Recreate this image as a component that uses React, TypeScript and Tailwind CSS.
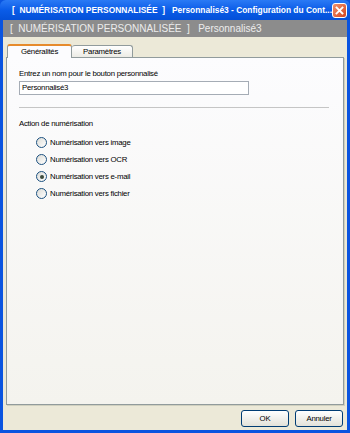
import React from 'react';

const font = { fontFamily: '"Liberation Sans", Arial, sans-serif' };

function Radio({ label, checked }: { label: string; checked?: boolean }) {
    return (
        <div className="flex items-center h-[17px]">
            <span className="w-[11px] h-[11px] rounded-full border border-[#1c5180] bg-gradient-to-br from-[#dcdcd7] to-white flex items-center justify-center">
                {checked && <span className="w-[4px] h-[4px] rounded-full bg-[#3c4a3c]" />}
            </span>
            <span className="ml-[3px] text-[7.8px] tracking-[-0.25px] text-black">{label}</span>
        </div>
    );
}

function XpButton({ label }: { label: string }) {
    return (
        <button className="w-[48px] h-[17px] rounded-[3px] border border-[#003c74] bg-gradient-to-b from-white to-[#e3e2da] text-[7.8px] tracking-[-0.25px] text-black leading-none">
            {label}
        </button>
    );
}

export default function App() {
    return (
        <div className="w-[350px] h-[433px] flex flex-col bg-[#0a54e0] overflow-hidden" style={font}>
            {/* title bar */}
            <div className="h-[20px] flex items-center bg-gradient-to-b from-[#2a7af5] via-[#0a5ce8] to-[#0450d8] rounded-t-[6px] pl-[12px] pr-[3px]">
                <span className="min-w-0 overflow-hidden text-white font-bold text-[8.4px] whitespace-nowrap">
                    [&nbsp;&nbsp;NUMÉRISATION PERSONNALISÉE&nbsp;&nbsp;]&nbsp;&nbsp;&nbsp;Personnalisé3 - Configuration du Cont...
                </span>
                <div className="ml-auto shrink-0 w-[15px] h-[15px] rounded-[3px] border border-white bg-gradient-to-br from-[#f0916c] to-[#d2431c] flex items-center justify-center">
                    <svg width="9" height="9" viewBox="0 0 9 9">
                        <path d="M1.5 1.5 L7.5 7.5 M7.5 1.5 L1.5 7.5" stroke="white" strokeWidth="1.8" strokeLinecap="square" />
                    </svg>
                </div>
            </div>

            {/* window body */}
            <div className="flex-1 flex flex-col mx-[3px] mb-[3px] bg-[#ece9d8]">
                <div className="h-[17px] bg-[#8c8c8c] flex items-center pl-[7px]">
                    <span className="text-[#ececec] text-[10px] whitespace-nowrap">
                        [&nbsp;&nbsp;NUMÉRISATION PERSONNALISÉE&nbsp;&nbsp;]&nbsp;&nbsp;&nbsp;Personnalisé3
                    </span>
                </div>

                <div className="flex-1 flex flex-col px-[3px] pt-[6px]">
                    {/* tabs */}
                    <div className="flex items-end h-[14px] pl-[1px]">
                        <div className="relative z-10 w-[65px] h-[14px] -mb-px bg-[#fcfcfe] border border-[#919b9c] border-b-0 border-t-[#e68b2c] border-t-2 rounded-t-[3px] flex items-center justify-center text-[7.8px] tracking-[-0.25px] text-black">
                            Généralités
                        </div>
                        <div className="w-[61px] h-[12px] bg-gradient-to-b from-white to-[#ecebe5] border border-[#919b9c] border-b-0 border-l-0 rounded-t-[3px] flex items-center justify-center text-[7.8px] tracking-[-0.25px] text-black">
                            Paramètres
                        </div>
                    </div>

                    {/* panel */}
                    <div className="h-[348px] border border-[#919b9c] bg-gradient-to-b from-[#fcfcfe] to-[#f4f3ee] px-[12px] pt-[11px] shadow-[1px_1px_0_#d0d0bf] text-[7.8px] tracking-[-0.25px] text-black">
                        <div className="leading-[10px]">Entrez un nom pour le bouton personnalisé</div>
                        <div className="mt-[2px] w-[230px] h-[14px] border border-[#a5acb5] bg-white flex items-center pl-[2px]">
                            Personnalisé3
                        </div>
                        <div className="mt-[12px] mr-[2px] border-t border-[#c5c5c5]" />
                        <div className="mt-[11px] leading-[10px]">Action de numérisation</div>
                        <div className="mt-[5px] pl-[17px] flex flex-col">
                            <Radio label="Numérisation vers image" />
                            <Radio label="Numérisation vers OCR" />
                            <Radio label="Numérisation vers e-mail" checked />
                            <Radio label="Numérisation vers fichier" />
                        </div>
                    </div>

                    {/* buttons */}
                    <div className="flex justify-end gap-[6px] mt-[5px] pr-[1px]">
                        <XpButton label="OK" />
                        <XpButton label="Annuler" />
                    </div>
                </div>
            </div>
        </div>
    );
}
